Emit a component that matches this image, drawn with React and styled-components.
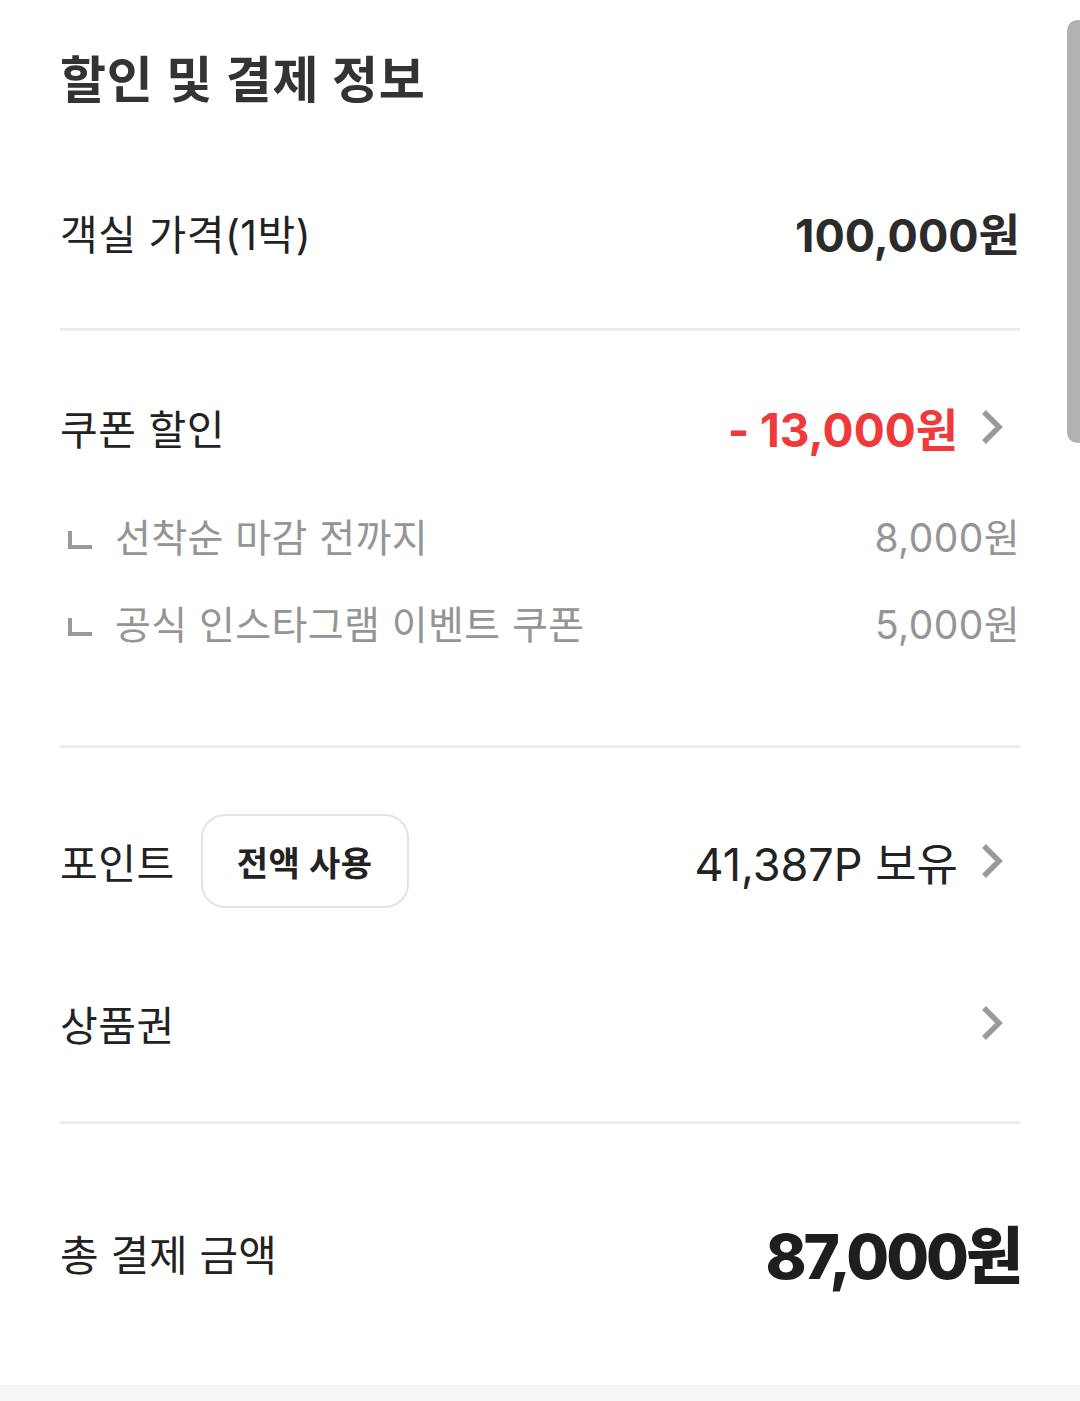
import React from 'react';
import styled, { createGlobalStyle } from 'styled-components';

const GlobalStyle = createGlobalStyle`
  html, body {
    margin: 0;
    padding: 0;
    background: #ffffff;
  }
  body {
    font-family: Inter, "Noto Sans CJK KR", "Noto Sans", sans-serif;
    color: #222;
  }
`;

const Page = styled.div`
  position: relative;
  min-height: 1401px;
  display: flex;
  flex-direction: column;
  background: #fff;
  overflow: hidden;
`;

const Content = styled.div`
  margin: 0 60px;
`;

const Title = styled.h1`
  margin: 0;
  padding-top: 48px;
  font-size: 50px;
  line-height: 64px;
  font-weight: 700;
  color: #333;
  letter-spacing: 0.8px;
`;

const Group = styled.section`
  padding: ${(p) => p.$pad};
  border-bottom: ${(p) => (p.$last ? 'none' : '3px solid #ececec')};
  display: flex;
  flex-direction: column;
  gap: ${(p) => p.$gap || '0px'};
`;

const Row = styled.div`
  height: 96px;
  display: flex;
  align-items: center;
  justify-content: space-between;
`;

const Label = styled.span`
  font-size: ${(p) => p.$size || '41px'};
  letter-spacing: ${(p) => p.$spacing || '0.5px'};
  color: #222;
  display: flex;
  align-items: center;
`;

const Right = styled.div`
  display: flex;
  align-items: center;
`;

const Amount = styled.span`
  font-size: ${(p) => p.$size || '45px'};
  font-weight: ${(p) => p.$weight || 700};
  color: ${(p) => p.$color || '#2b2b2b'};
  letter-spacing: ${(p) => p.$spacing || '0px'};
`;

const SubList = styled.div`
  margin-top: 16px;
  display: flex;
  flex-direction: column;
`;

const SubRow = styled.div`
  height: 87px;
  display: flex;
  align-items: center;
  justify-content: space-between;
  color: #959595;
  font-size: 39px;
  letter-spacing: 0.4px;
`;

const SubLabel = styled.span`
  display: flex;
  align-items: center;
`;

const Corner = styled.span`
  width: 24px;
  height: 18px;
  margin: 10px 23px 0 8px;
  border-left: 4px solid #9a9a9a;
  border-bottom: 4px solid #9a9a9a;
  box-sizing: border-box;
`;

const ChevronBox = styled.span`
  width: 62px;
  display: flex;
  justify-content: flex-start;
  padding-left: 23px;
  box-sizing: border-box;
`;

const PillButton = styled.button`
  margin-left: 26px;
  width: 208px;
  height: 94px;
  border: 2px solid #e3e3e3;
  border-radius: 24px;
  background: #fff;
  font-family: inherit;
  font-size: 34px;
  font-weight: 700;
  color: #222;
  letter-spacing: 0.5px;
  cursor: pointer;
`;

const Footer = styled.div`
  flex: 1;
  background: #f5f6f8;
`;

const ScrollThumb = styled.div`
  position: absolute;
  top: 20px;
  right: -8px;
  width: 21px;
  height: 423px;
  border-radius: 11px;
  background: #b1b1b1;
`;

const Chevron = () => (
  <ChevronBox>
    <svg width="22" height="36" viewBox="0 0 22 36" fill="none">
      <path d="M3 3 L18 18 L3 33" stroke="#9a9a9a" strokeWidth="5.5" strokeLinejoin="miter" />
    </svg>
  </ChevronBox>
);

export default function App() {
  return (
    <>
      <GlobalStyle />
      <Page>
        <Content>
          <Title>할인 및 결제 정보</Title>

          <Group $pad="72px 0 48px">
            <Row>
              <Label>객실 가격(1박)</Label>
              <Amount>100,000원</Amount>
            </Row>
          </Group>

          <Group $pad="48px 0 80px">
            <Row>
              <Label>쿠폰 할인</Label>
              <Right>
                <Amount $size="46px" $color="#ee3a3a">- 13,000원</Amount>
                <Chevron />
              </Right>
            </Row>
            <SubList>
              <SubRow>
                <SubLabel><Corner />선착순 마감 전까지</SubLabel>
                <span>8,000원</span>
              </SubRow>
              <SubRow>
                <SubLabel><Corner />공식 인스타그램 이벤트 쿠폰</SubLabel>
                <span>5,000원</span>
              </SubRow>
            </SubList>
          </Group>

          <Group $pad="65px 0 50px" $gap="66px">
            <Row>
              <Label>
                포인트
                <PillButton>전액 사용</PillButton>
              </Label>
              <Right>
                <Amount $size="45px" $weight={400} $color="#222">41,387P 보유</Amount>
                <Chevron />
              </Right>
            </Row>
            <Row>
              <Label>상품권</Label>
              <Chevron />
            </Row>
          </Group>

          <Group $pad="80px 0 85px" $last>
            <Row>
              <Label $size="42px" $spacing="0px">총 결제 금액</Label>
              <Amount $size="62px" $weight={800} $color="#1e1e1e" $spacing="-3px">87,000원</Amount>
            </Row>
          </Group>
        </Content>
        <Footer />
        <ScrollThumb />
      </Page>
    </>
  );
}
